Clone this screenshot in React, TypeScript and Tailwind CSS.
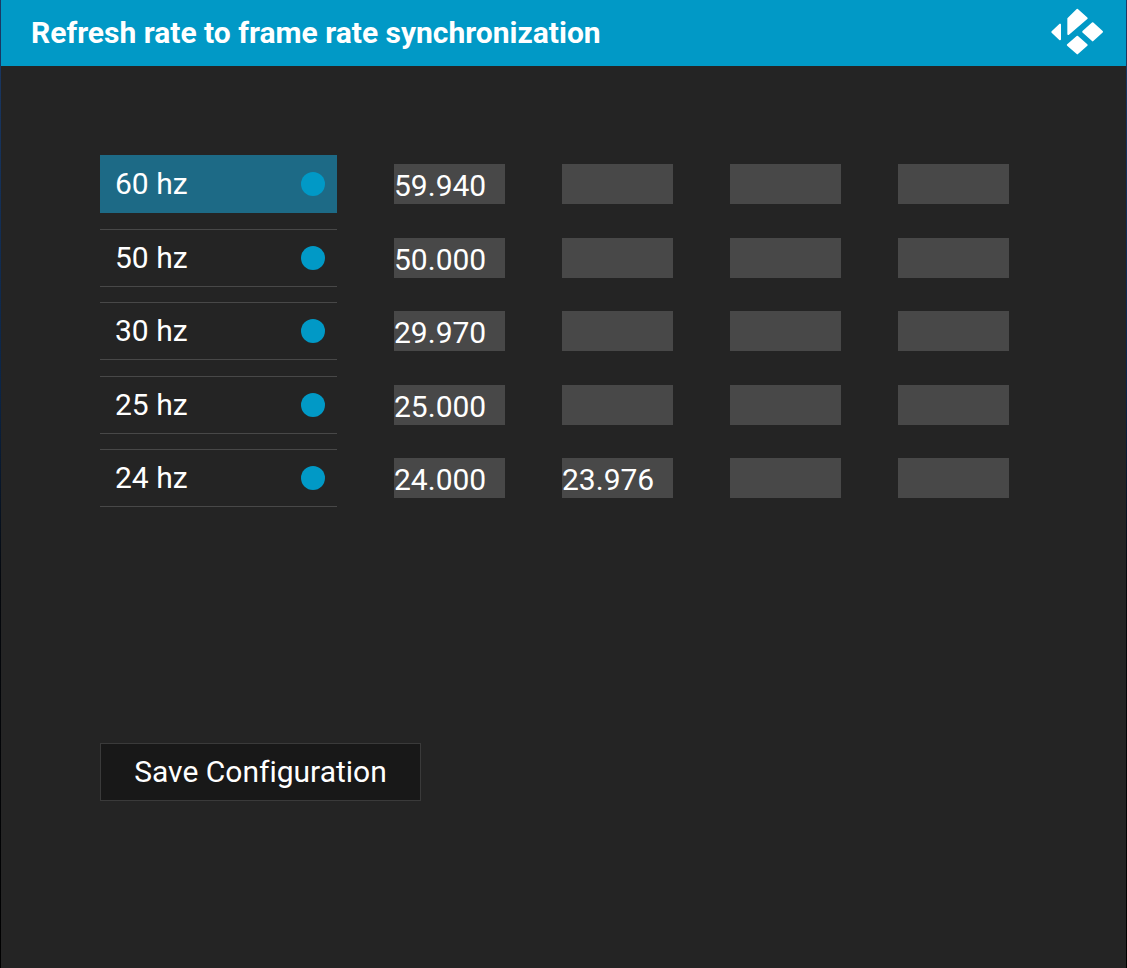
import { useState } from "react";

const rates = [
  { name: "60 hz", values: ["59.940", "", "", ""] },
  { name: "50 hz", values: ["50.000", "", "", ""] },
  { name: "30 hz", values: ["29.970", "", "", ""] },
  { name: "25 hz", values: ["25.000", "", "", ""] },
  { name: "24 hz", values: ["24.000", "23.976", "", ""] },
];

function KodiLogo() {
  return (
    <svg viewBox="60 24 162 150" className="h-[50px] w-[54px]" fill="#fff" stroke="#fff" strokeWidth="6" strokeLinejoin="round" role="img" aria-label="Kodi">
      <path d="M67 96 90 74V118Z" />
      <path d="M141.500 29.500 170 55 115 102V56Z" />
      <path d="M188 70 216 95.500 188 121 159.500 95.500Z" />
      <path d="M142 110.500 170 135 142 160 113.500 135Z" />
    </svg>
  );
}

function RateRow({ name, values, selected }: { name: string; values: string[]; selected: boolean }) {
  const [enabled, setEnabled] = useState(true);
  return (
    <div className="flex h-[58px] items-center gap-[57px]">
      <button
        type="button"
        aria-pressed={enabled}
        onClick={() => setEnabled(!enabled)}
        className={`flex h-[58px] w-[237px] shrink-0 items-center justify-between border-y pr-3 pl-[15px] text-white outline-none ${
          selected ? "border-[#1d6a86] bg-[#1d6a86]" : "border-[#484848]"
        }`}
      >
        <span>{name}</span>
        <span className={`size-6 rounded-full ${enabled ? "bg-[#0199c6]" : "bg-[#484848]"}`} />
      </button>
      {values.map((value, i) => (
        <input
          key={i}
          type="text"
          aria-label={`${name} refresh rate ${i + 1}`}
          defaultValue={value}
          className="h-10 w-[111px] shrink-0 bg-[#484848] pt-[3px] text-white outline-none"
        />
      ))}
    </div>
  );
}

export default function App() {
  return (
    <div className="flex min-h-screen flex-col bg-[linear-gradient(to_bottom,#1c3a66,#0b2547_40%,#05080d_60%,#000)] px-px font-['Roboto',sans-serif] text-[30px] leading-9 text-white">
      <header className="flex h-[66px] items-center justify-between bg-[#0199c6] pr-[22px] pl-[30px]">
        <h1 className="font-bold">Refresh rate to frame rate synchronization</h1>
        <KodiLogo />
      </header>
      <main className="flex grow flex-col items-start bg-[#242424] px-[99px] pt-[89px]">
        <div className="flex h-[352px] flex-col justify-between">
          {rates.map((rate, i) => (
            <RateRow key={rate.name} name={rate.name} values={rate.values} selected={i === 0} />
          ))}
        </div>
        <button
          type="button"
          className="mt-[236px] h-[58px] w-[321px] border border-[#3a3a3a] bg-[#181818] text-white [font-variant-ligatures:none]"
        >
          Save Configuration
        </button>
      </main>
    </div>
  );
}
